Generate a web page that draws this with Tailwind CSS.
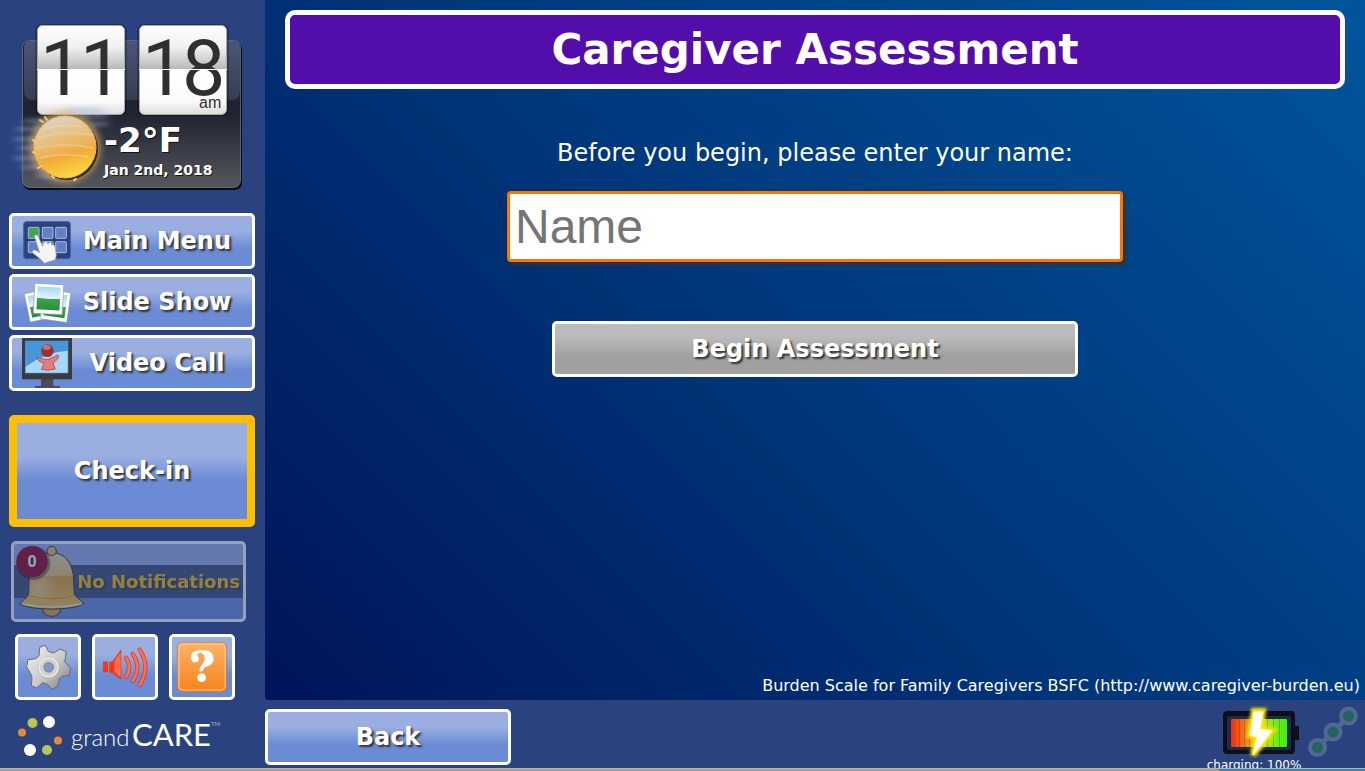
<!DOCTYPE html>
<html lang="en">

<head>
    <meta charset="utf-8" />
    <meta content="width=device-width, initial-scale=1.0" name="viewport" />
    <title>Caregiver Assessment</title>
    <script src="https://cdn.jsdelivr.net/npm/@tailwindcss/browser@4"></script>
    <style>
        body {
            font-family: 'DejaVu Sans', sans-serif;
        }
    </style>
</head>

<body class="bg-[#2a437e] text-white min-h-screen flex flex-col overflow-hidden">
    <div class="flex flex-1">
        <!-- Sidebar -->
        <aside class="w-[265px] shrink-0 flex flex-col">
            <!-- Clock and weather -->
            <svg class="w-full h-[200px]" viewBox="0 0 265 200" role="img" aria-label="Clock and weather">
                <defs>
                    <linearGradient id="panel" x1="0" y1="0" x2="0" y2="1">
                        <stop offset="0" stop-color="#1d222e" />
                        <stop offset=".5" stop-color="#1f2430" />
                        <stop offset="1" stop-color="#54565e" />
                    </linearGradient>
                    <linearGradient id="gloss" x1="0" y1="0" x2="0" y2="1">
                        <stop offset="0" stop-color="#4a5678" />
                        <stop offset="1" stop-color="#363d52" />
                    </linearGradient>
                    <linearGradient id="flap" x1="0" y1="0" x2="0" y2="1">
                        <stop offset="0" stop-color="#fff" />
                        <stop offset=".25" stop-color="#f0f0f0" />
                        <stop offset=".49" stop-color="#b8b8b8" />
                        <stop offset=".5" stop-color="#fff" />
                        <stop offset=".85" stop-color="#fafafa" />
                        <stop offset="1" stop-color="#dcdcdc" />
                    </linearGradient>
                    <linearGradient id="sun" x1=".3" y1="0" x2=".6" y2="1">
                        <stop offset="0" stop-color="#d9d4cc" />
                        <stop offset=".35" stop-color="#e6c083" />
                        <stop offset=".65" stop-color="#f2ab3c" />
                        <stop offset="1" stop-color="#fbdc3c" />
                    </linearGradient>
                    <filter id="soft" x="-30%" y="-30%" width="160%" height="160%">
                        <feGaussianBlur stdDeviation="3" />
                    </filter>
                    <filter id="streak" x="-30%" y="-30%" width="160%" height="160%">
                        <feGaussianBlur stdDeviation="4 2" />
                    </filter>
                </defs>
                <rect x="23" y="42" width="219" height="148" rx="7" fill="#0b0d12" />
                <rect x="22.500" y="40.500" width="218" height="147" rx="7" fill="url(#panel)" stroke="#7b88a8" stroke-opacity=".6" />
                <path d="M24 47q0-6 7-6h202q7 0 7 6v44q0 9-9 9H33q-9 0-9-9z" fill="url(#gloss)" />
                <rect x="35" y="24" width="92" height="92" rx="7" fill="#000" opacity=".25" />
                <rect x="137" y="24" width="92" height="92" rx="7" fill="#000" opacity=".25" />
                <rect x="37.500" y="25.500" width="87" height="89" rx="5" fill="url(#flap)" stroke="#a8a8a8" />
                <rect x="139.500" y="25.500" width="87" height="89" rx="5" fill="url(#flap)" stroke="#a8a8a8" />
                <g font-family="Roboto, sans-serif" font-size="77" fill="#2f2f2f">
                    <text x="40" y="95">1</text>
                    <text x="80" y="95">1</text>
                    <text x="142" y="95">1</text>
                    <text x="182" y="95">8</text>
                </g>
                <text x="199" y="108" font-family="Liberation Sans, sans-serif" font-size="16" fill="#2f2f2f">am</text>
                <path d="M37 69.500h88M139 69.500h88" stroke="#fff" />
                <circle cx="65" cy="147" r="36" fill="#dcae62" opacity=".65" filter="url(#soft)" />
                <path d="M16 129h34M24 121h30M14 139h36M18 148h30M14 158h36M22 167h30M36 176h30M68 110h34M78 116h30M90 124h18" stroke="#9fb0dc" stroke-width="4" opacity=".5" filter="url(#streak)" />
                <ellipse cx="67" cy="149" rx="31" ry="31" fill="#33291c" />
                <circle cx="65" cy="147" r="31" fill="url(#sun)" stroke="#f5b743" stroke-width="1" />
                <path d="M37 138q25-8 56-3M36 148q28-6 58 0M40 158q22-6 48-1M42 130q18-7 40-3" fill="none" stroke="#f7d9a6" stroke-width="2" opacity=".4" />
                <path d="M40 120l3 2M45 117l2 3M33 140l2 2M33 152l2 1M38 168l3-2M52 176l2 2M74 180l2-1" stroke="#ffc468" stroke-width="2" stroke-linecap="round" />
                <g font-weight="bold" fill="#000" opacity=".7" aria-hidden="true">
                    <text x="105" y="153" font-size="34">-2°F</text>
                    <text x="105" y="176" font-size="14">Jan 2nd, 2018</text>
                </g>
                <g font-weight="bold" fill="#fff">
                    <text x="104" y="152" font-size="34">-2°F</text>
                    <text x="104" y="175" font-size="14">Jan 2nd, 2018</text>
                </g>
            </svg>

            <!-- Main buttons -->
            <nav class="mt-[13px] ml-[9px] w-[246px] flex flex-col gap-[5px]">
                <button class="h-14 px-[10px] flex items-center border-3 border-white rounded-[5px] bg-linear-to-b from-[#9aaee0] from-30% to-[#6b8bd5] to-65% text-2xl font-bold [text-shadow:2px_2px_2px_#333]">
                    <svg class="size-[50px] shrink-0" viewBox="66 33 150 150">
                        <rect x="71" y="50" width="140" height="111" rx="8" fill="#2a437e" stroke="#4b5f96" stroke-width="3" />
                        <g fill="#6480c4" stroke="#a9bae6" stroke-width="3">
                            <rect x="85" y="67" width="32" height="33" rx="2" fill="#45a24e" />
                            <rect x="127" y="67" width="32" height="33" rx="2" />
                            <rect x="167" y="67" width="32" height="33" rx="2" />
                            <rect x="85" y="110" width="32" height="33" rx="2" />
                            <rect x="127" y="110" width="32" height="33" rx="2" />
                            <rect x="167" y="110" width="32" height="33" rx="2" />
                        </g>
                        <path d="M103 93Q108 85 114 93L128 124L130 116Q136 104 143 114L144 118Q149 106 155 116L156 121Q162 114 165 126L169 150L166 164L133 175L122 163L97 143Q95 132 108 136L119 143z" fill="#f4f4f4" stroke="#9a9a9a" stroke-width="2" />
                    </svg>
                    <span class="flex-1">Main Menu</span>
                </button>
                <button class="h-14 px-[10px] flex items-center border-3 border-white rounded-[5px] bg-linear-to-b from-[#9aaee0] from-30% to-[#6b8bd5] to-65% text-2xl font-bold [text-shadow:2px_2px_2px_#333]">
                    <svg class="size-[50px] shrink-0" viewBox="0 0 50 50">
                        <defs>
                            <linearGradient id="photo" x1="0" y1="0" x2="0" y2="1">
                                <stop offset="0" stop-color="#a5d8f5" />
                                <stop offset=".5" stop-color="#e6f5fc" />
                                <stop offset=".52" stop-color="#3aa648" />
                                <stop offset="1" stop-color="#2a8c3a" />
                            </linearGradient>
                        </defs>
                        <g transform="rotate(-12 17 29)">
                            <rect x="5" y="14" width="27" height="29" fill="#fff" stroke="#8490a8" stroke-width=".6" />
                            <rect x="8" y="17" width="21" height="22" fill="url(#photo)" />
                        </g>
                        <g transform="rotate(8 35 29)">
                            <rect x="20" y="14" width="27" height="30" fill="#fff" stroke="#8490a8" stroke-width=".6" />
                            <rect x="23" y="17" width="21" height="23" fill="url(#photo)" />
                        </g>
                        <g transform="rotate(3 27 22)">
                            <rect x="12" y="7" width="29" height="30" fill="#fff" stroke="#8490a8" stroke-width=".6" />
                            <rect x="15" y="10" width="23" height="23" fill="url(#photo)" />
                        </g>
                    </svg>
                    <span class="flex-1">Slide Show</span>
                </button>
                <button class="h-14 px-[10px] flex items-center border-3 border-white rounded-[5px] bg-linear-to-b from-[#9aaee0] from-30% to-[#6b8bd5] to-65% text-2xl font-bold [text-shadow:2px_2px_2px_#333]">
                    <svg class="size-[50px] shrink-0" viewBox="66 398 150 150">
                        <path d="M123 520h37v22h20v6h-75v-6h18z" fill="#4a4d55" />
                        <rect x="66" y="398" width="150" height="124" fill="#383b41" />
                        <rect x="75" y="406" width="130" height="98" fill="#4796d8" />
                        <path d="M77 484Q135 440 203 436V502H77z" fill="#a9d6f2" />
                        <path d="M110 457l26 5q6 1 12-1l26-12q5 4-2 13l-13 11 7 18q-22 7-42 1l8-18q-18-5-22-17z" fill="#e47a82" stroke="#a8323e" stroke-width="2" />
                        <circle cx="142" cy="436" r="19" fill="#9c3034" />
                        <ellipse cx="140" cy="426" rx="12" ry="8" fill="#cf6f70" />
                    </svg>
                    <span class="flex-1">Video Call</span>
                </button>
            </nav>

            <button class="mt-6 ml-[9px] w-[246px] h-28 border-8 border-[#ffbf00] rounded-[5px] bg-linear-to-b from-[#9aaee0] from-35% to-[#6b8bd5] to-60% text-2xl font-bold [text-shadow:2px_2px_2px_#333]">Check-in</button>

            <!-- Notifications -->
            <button class="relative mt-[14px] ml-[11px] w-[235px] h-[81px] flex items-center border-3 border-white rounded-[5px] bg-linear-to-b from-[#9aaee0] from-30% to-[#6b8bd5] to-65% opacity-50" disabled>
                <span class="w-full h-[33px] leading-[33px] pr-[3px] bg-[#3f4c6e] text-right text-lg font-bold text-[#ffc000] whitespace-nowrap [text-shadow:2px_2px_2px_#333]">No Notifications</span>
                <svg class="absolute left-0 top-0 w-[75px] h-[75px]" viewBox="42 27 225 225">
                    <defs>
                        <linearGradient id="bell" x1="0" y1="0" x2="0" y2="1">
                            <stop offset="0" stop-color="#f4d8a0" />
                            <stop offset=".4" stop-color="#f4c468" />
                            <stop offset=".43" stop-color="#e6a01c" />
                            <stop offset="1" stop-color="#ffc840" />
                        </linearGradient>
                        <radialGradient id="bellLight" cx=".3" cy=".6" r=".3">
                            <stop offset="0" stop-color="#fff0c8" stop-opacity=".5" />
                            <stop offset="1" stop-color="#fff0c8" stop-opacity="0" />
                        </radialGradient>
                    </defs>
                    <path d="M128 220q2 24 27 24t27-24z" fill="#e0a440" stroke="#3a2a10" stroke-width="3" />
                    <path d="M155 53C195 53 214 82 220 120L223 178C230 190 245 195 251 206C235 218 190 222 155 222C120 222 75 218 59 206C68 196 80 190 86 178L88 130C92 82 118 53 155 53z" fill="url(#bell)" stroke="#3a2a10" stroke-width="3" />
                    <path d="M155 53C195 53 214 82 220 120L223 178C230 190 245 195 251 206C235 218 190 222 155 222C120 222 75 218 59 206C68 196 80 190 86 178L88 130C92 82 118 53 155 53z" fill="url(#bellLight)" />
                    <path d="M66 207Q155 226 244 207" fill="none" stroke="#fff3d0" stroke-width="4" />
                    <path d="M86 182Q155 200 223 182" fill="none" stroke="#b8822c" stroke-width="2" />
                    <circle cx="155" cy="48" r="14" fill="#f2bc5c" stroke="#3a2a10" stroke-width="3" />
                    <circle cx="100" cy="84" r="51" fill="#000" opacity=".4" />
                    <circle cx="96" cy="80" r="47" fill="#940018" />
                    <text x="96" y="96" text-anchor="middle" font-family="Noto Sans, sans-serif" font-size="48" font-weight="bold" fill="#fff">0</text>
                </svg>
            </button>

            <!-- Tools -->
            <div class="mt-3 ml-[15px] flex gap-[11px]">
                <button aria-label="Settings" class="size-[66px] border-3 border-white rounded-[5px] bg-linear-to-b from-[#9aaee0] from-30% to-[#6b8bd5] to-65%">
                    <svg class="size-[60px]" viewBox="54 306 180 180">
                        <defs>
                            <linearGradient id="gear" x1="0" y1="0" x2="1" y2="1">
                                <stop offset="0" stop-color="#f4f4f4" />
                                <stop offset=".55" stop-color="#c8c8c8" />
                                <stop offset="1" stop-color="#777" />
                            </linearGradient>
                        </defs>
                        <path d="M119 337L136 331L145 349L160 354L180 342L199 350L196 370L194 381L212 398L208 421L187 424L178 430L173 455L155 463L143 448L128 443L110 459L94 452L96 428L93 418L80 395L84 374L108 371L117 362z" fill="url(#gear)" stroke="#6c6c6c" stroke-width="3" stroke-linejoin="round" />
                        <circle cx="146" cy="397" r="29" fill="#d2d2d2" stroke="#f5f5f5" stroke-width="4" />
                        <circle cx="146" cy="397" r="31" fill="none" stroke="#999" stroke-width="1" />
                        <circle cx="146" cy="397" r="14" fill="#7c98d8" stroke="#8a8a8a" stroke-width="4" />
                    </svg>
                </button>
                <button aria-label="Volume" class="size-[66px] border-3 border-white rounded-[5px] bg-linear-to-b from-[#9aaee0] from-30% to-[#6b8bd5] to-65%">
                    <svg class="size-[60px]" viewBox="285 306 180 180">
                        <path d="M310 381h13v30h-13zM329 381h8l26-36v88l-26-20h-8z" fill="#fb3410" stroke="#d8401c" stroke-width="2" />
                        <path d="M343 378l19-27v76l-19-16z" fill="#ff6a50" />
                        <g fill="none" stroke="#c93a26" stroke-width="13" stroke-linecap="round">
                            <path d="M378 368q20 29 0 58" />
                            <path d="M398 356q28 41 0 82" />
                            <path d="M419 344q34 53 0 106" />
                        </g>
                        <g fill="none" stroke="#ff6c54" stroke-width="9" stroke-linecap="round">
                            <path d="M378 368q20 29 0 58" />
                            <path d="M398 356q28 41 0 82" />
                            <path d="M419 344q34 53 0 106" />
                        </g>
                    </svg>
                </button>
                <button aria-label="Help" class="size-[66px] border-3 border-white rounded-[5px] bg-linear-to-b from-[#9aaee0] from-30% to-[#6b8bd5] to-65%">
                    <svg class="size-[60px]" viewBox="513 306 180 180">
                        <defs>
                            <linearGradient id="help" x1="0" y1="0" x2="0" y2="1">
                                <stop offset="0" stop-color="#fbb567" />
                                <stop offset="1" stop-color="#f5821c" />
                            </linearGradient>
                        </defs>
                        <rect x="529" y="322" width="148" height="148" rx="14" fill="url(#help)" stroke="#d9731c" stroke-width="2" />
                        <rect x="534" y="327" width="138" height="138" rx="11" fill="none" stroke="#ffcf98" stroke-width="3" />
                        <path d="M570 372C567 353 582 345 603 345C625 345 638 355 638 371C638 388 622 392 612 397C607 400 606 403 606 409H596C593 392 611 387 611 371C611 359 606 353 598 353C592 353 589 356 589 360C589 364 594 366 593 374C592 385 572 385 570 372z" fill="#fff" />
                        <circle cx="602" cy="428" r="13" fill="#fff" />
                    </svg>
                </button>
            </div>
        </aside>

        <!-- Main content -->
        <main class="flex-1 flex flex-col items-center rounded-bl-[3px] bg-linear-[45deg] from-[#00145a] via-[#00387c] to-[#00559c]">
            <div class="self-stretch px-5 pt-[10px]">
                <h1 class="h-[79px] border-5 border-white rounded-[10px] bg-[#520dab] text-center text-[42px] leading-[69px] font-bold">Caregiver Assessment</h1>
            </div>
            <label for="name" class="mt-12 text-2xl leading-8">Before you begin, please enter your name:</label>
            <input id="name" type="text" placeholder="Name" class="mt-[22px] w-[56%] h-[71px] px-[5px] bg-white border-3 border-[#ff7300] rounded-[4px] text-5xl text-black placeholder:text-[#757575] font-['Liberation_Sans',sans-serif] shadow-[3px_3px_4px_#333] outline-none" />
            <button class="mt-[59px] w-[526px] h-14 border-3 border-white rounded-[5px] bg-linear-to-b from-[#bbbbbb] from-25% to-[#a0a0a0] to-65% text-2xl font-bold [text-shadow:2px_2px_2px_#333]">Begin Assessment</button>
            <p class="mt-auto self-end pr-[5px] pb-[2px] text-base">Burden Scale for Family Caregivers BSFC (http://www.caregiver-burden.eu)</p>
        </main>
    </div>

    <!-- Footer -->
    <footer class="h-[68px] flex items-start overflow-hidden">
        <div class="w-[265px] shrink-0">
            <svg class="w-full h-[68px]" viewBox="0 0 265 68" role="img" aria-label="grandCARE">
                <g fill="#fff">
                    <circle cx="49" cy="22" r="6" />
                    <circle cx="30" cy="50" r="6" />
                </g>
                <g fill="#b9c552">
                    <circle cx="32.500" cy="23" r="5" />
                    <circle cx="47" cy="50" r="5" />
                </g>
                <g fill="#e68a35">
                    <circle cx="22" cy="32.500" r="4" />
                    <circle cx="58" cy="40.500" r="4" />
                </g>
                <g font-family="Lato, sans-serif" fill="#fff">
                    <text x="71" y="46" font-size="24" font-weight="300">grand</text>
                    <text x="132" y="46" font-size="31">CARE</text>
                    <text x="211" y="26" font-size="6" font-weight="300">TM</text>
                </g>
            </svg>
        </div>
        <button class="mt-[9px] w-[246px] h-14 border-3 border-white rounded-[5px] bg-linear-to-b from-[#9aaee0] from-30% to-[#6b8bd5] to-65% text-2xl font-bold [text-shadow:2px_2px_2px_#333]">Back</button>
        <div class="ml-auto flex pt-1 pr-[5px]">
            <div class="flex flex-col items-center w-[100px]">
                <svg class="w-[100px] h-[54px] shrink-0" viewBox="1204 704 100 54">
                    <defs>
                        <linearGradient id="charge">
                            <stop offset="0" stop-color="#f52a0c" />
                            <stop offset=".28" stop-color="#f08a1c" />
                            <stop offset=".5" stop-color="#ecd818" />
                            <stop offset=".7" stop-color="#98e81c" />
                            <stop offset="1" stop-color="#38f010" />
                        </linearGradient>
                        <filter id="glow" x="-50%" y="-30%" width="200%" height="160%">
                            <feGaussianBlur stdDeviation="1.500" />
                        </filter>
                    </defs>
                    <rect x="1223" y="711" width="72" height="43" rx="4" fill="#0d1018" />
                    <rect x="1294" y="726" width="5" height="14" fill="#0d1018" />
                    <rect x="1227" y="716" width="64" height="34" rx="2" fill="#1b2c50" />
                    <rect x="1231" y="719" width="56" height="28" rx="1" fill="url(#charge)" />
                    <path d="M1239.500 719v28M1244.500 719v28M1249.500 719v28M1267.500 719v28M1273.500 719v28M1279.500 719v28" stroke="#000" stroke-opacity=".2" />
                    <path d="M1254 711L1263 711L1260 729L1272 731L1253 755L1257 737L1250 735z" fill="#ffe600" stroke="#ffe600" stroke-width="6" filter="url(#glow)" />
                    <path d="M1254 712L1263 712L1260 729L1272 731L1253 755L1257 737L1250 735z" fill="#fff" stroke="#fffbd0" />
                </svg>
                <span class="text-xs leading-[14px] whitespace-nowrap">charging: 100%</span>
            </div>
            <svg class="w-[56px] h-[54px]" viewBox="1304 704 56 54">
                <path d="M1317 748l16-16 16-16" stroke="#536796" stroke-width="5" />
                <g fill="#22655f" stroke="#536796" stroke-width="4">
                    <circle cx="1317.500" cy="747.500" r="7.500" />
                    <circle cx="1333" cy="732" r="7.500" />
                    <circle cx="1348.500" cy="716" r="7.500" />
                </g>
            </svg>
        </div>
    </footer>
    <!-- Taskbar edge -->
    <div class="h-[3px] flex bg-[#a3a1a0] border-t border-[#b5b3b2]">
        <div class="ml-auto w-[146px] bg-[#4a7fa9]"></div>
    </div>
</body>

</html>
